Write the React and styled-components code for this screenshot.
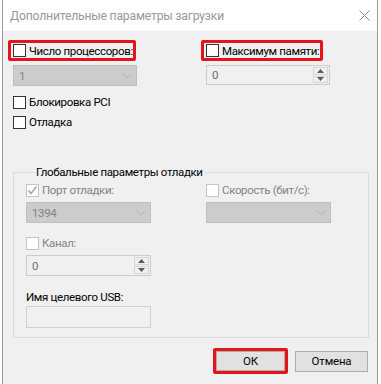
import React from 'react';
import styled, { createGlobalStyle } from 'styled-components';

const GlobalStyle = createGlobalStyle`
  html, body {
    margin: 0;
    padding: 0;
    background: #ffffff;
  }
  body {
    font-family: Roboto, "Noto Sans", sans-serif;
    font-size: 11.5px;
    letter-spacing: -0.35px;
    color: #000;
  }
`;

const Window = styled.div`
  width: 376px;
  height: 384px;
  margin-left: 2px;
  box-sizing: border-box;
  border-left: 1px solid #9a9a9a;
  border-right: 1px solid #9a9a9a;
  background: #f0f0f0;
  display: flex;
  flex-direction: column;
`;

const TitleBar = styled.div`
  height: 31px;
  flex-shrink: 0;
  background: #ffffff;
  display: flex;
  align-items: center;
  justify-content: space-between;
  padding: 0 7px 0 7px;
  box-sizing: border-box;
`;

const Title = styled.span`
  color: #999999;
  font-size: 12.2px;
  letter-spacing: -0.2px;
  line-height: 16px;
  padding-top: 1px;
  white-space: nowrap;
`;

const Body = styled.div`
  padding: 9px 9px 0 10px;
  display: flex;
  flex-direction: column;
`;

const TopGrid = styled.div`
  display: grid;
  grid-template-columns: 193px 1fr;
  row-gap: 4px;
`;

const Highlight = styled.div`
  display: flex;
  align-items: center;
  gap: 3px;
  box-sizing: border-box;
  width: ${p => p.$width}px;
  height: ${p => p.$height || 21}px;
  margin-left: -5px;
  padding-left: 2px;
  border: 3px solid #e3141b;
  border-radius: 2px;
  white-space: nowrap;
`;

const CheckRow = styled.label`
  display: flex;
  align-items: center;
  gap: 3px;
  height: 13px;
  margin-top: ${p => p.$top || 0}px;
  color: ${p => (p.$disabled ? '#838383' : '#000')};
  line-height: 13px;
  white-space: nowrap;
`;

const Box = styled.span`
  width: 13px;
  height: 13px;
  box-sizing: border-box;
  flex-shrink: 0;
  background: #ffffff;
  border: 1px solid ${p => (p.$disabled ? '#c4c4c4' : '#333333')};
  display: flex;
  align-items: center;
  justify-content: center;
`;

const Combo = styled.div`
  width: ${p => p.$width}px;
  height: 21px;
  box-sizing: border-box;
  background: #cccccc;
  border: 1px solid #bfbfbf;
  display: flex;
  align-items: center;
  justify-content: space-between;
  padding: 0 4px 0 5px;
  color: #838383;
`;

const Spin = styled.div`
  width: ${p => p.$width}px;
  height: ${p => p.$height || 21}px;
  box-sizing: border-box;
  background: #f0f0f0;
  border: 1px solid #cccccc;
  display: flex;
  align-items: stretch;
  color: #6d6d6d;
`;

const SpinText = styled.span`
  flex: 1;
  display: flex;
  align-items: center;
  padding-left: 5px;
`;

const SpinButtons = styled.div`
  width: 15px;
  display: flex;
  flex-direction: column;
  padding: 1px 1px 1px 0;
  gap: 1px;
`;

const SpinButton = styled.div`
  flex: 1;
  border: 1px solid #d6d6d6;
  background: #f0f0f0;
  display: flex;
  align-items: center;
  justify-content: center;
`;

const Group = styled.fieldset`
  margin: 35px 0 0 0;
  padding: 4px 0 9px 12px;
  width: 356px;
  box-sizing: border-box;
  border: 1px solid #dcdcdc;
  min-inline-size: 0;
`;

const Legend = styled.legend`
  margin-left: 9px;
  padding: 0 1px;
  line-height: 16px;
  color: #000;
`;

const InnerGrid = styled.div`
  display: grid;
  grid-template-columns: 180px 1fr;
`;

const Field = styled.div`
  margin-top: ${p => p.$top || 0}px;
`;

const FieldLabel = styled.div`
  margin-top: 13px;
  line-height: 16px;
  height: 16px;
`;

const TextBox = styled.div`
  margin-top: 1px;
  width: 125px;
  height: 22px;
  box-sizing: border-box;
  border: 1px solid #d0d0d0;
  background: #f0f0f0;
`;

const Footer = styled.div`
  display: flex;
  justify-content: flex-end;
  align-items: center;
  gap: 7px;
  margin-top: 10px;
`;

const ButtonFrame = styled.div`
  border: 3px solid #e3141b;
  border-radius: 2px;
  display: flex;
`;

const Button = styled.button`
  width: ${p => p.$width}px;
  height: ${p => p.$height}px;
  box-sizing: border-box;
  border: 1px solid #adadad;
  background: #e1e1e1;
  font-family: inherit;
  font-size: 11.5px;
  letter-spacing: -0.2px;
  color: #000;
  padding: 0;
`;

const Chevron = () => (
  <svg width="10" height="6" viewBox="0 0 10 6">
    <polyline points="0.5,0.5 5,5 9.5,0.5" fill="none" stroke="#b4b4b4" strokeWidth="1" />
  </svg>
);

const CloseIcon = () => (
  <svg width="11" height="11" viewBox="0 0 11 11">
    <path d="M0.5 0.5 L10.5 10.5 M10.5 0.5 L0.5 10.5" stroke="#8a8a8a" strokeWidth="1" fill="none" />
  </svg>
);

const Check = ({ checked, disabled, label, top }) => (
  <CheckRow $top={top} $disabled={disabled}>
    <Box $disabled={disabled}>
      {checked && (
        <svg width="11" height="11" viewBox="0 0 11 11">
          <polyline points="1.5,5.5 4,8.5 9.5,1.5" fill="none" stroke="#a8a8a8" strokeWidth="1.6" />
        </svg>
      )}
    </Box>
    {label}
  </CheckRow>
);

const SpinBox = ({ value, width, height }) => (
  <Spin $width={width} $height={height}>
    <SpinText>{value}</SpinText>
    <SpinButtons>
      <SpinButton>
        <svg width="7" height="4" viewBox="0 0 7 4"><polygon points="3.5,0 7,4 0,4" fill="#5a5a5a" /></svg>
      </SpinButton>
      <SpinButton>
        <svg width="7" height="4" viewBox="0 0 7 4"><polygon points="0,0 7,0 3.5,4" fill="#5a5a5a" /></svg>
      </SpinButton>
    </SpinButtons>
  </Spin>
);

export default function App() {
  return (
    <>
      <GlobalStyle />
      <Window>
        <TitleBar>
          <Title>Дополнительные параметры загрузки</Title>
          <CloseIcon />
        </TitleBar>
        <Body>
          <TopGrid>
            <Highlight $width={128}>
              <Box />
              <span>Число процессоров:</span>
            </Highlight>
            <Highlight $width={122}>
              <Box />
              <span>Максимум памяти:</span>
            </Highlight>
            <Combo $width={124}>
              <span>1</span>
              <Chevron />
            </Combo>
            <SpinBox value="0" width={124} height={20} />
          </TopGrid>
          <Check label="Блокировка PCI" top={10} />
          <Check label="Отладка" top={7} />
          <Group>
            <Legend>Глобальные параметры отладки</Legend>
            <InnerGrid>
              <Check label="Порт отладки:" checked disabled />
              <Check label="Скорость (бит/с):" disabled />
              <Field $top={5}>
                <Combo $width={125}>
                  <span>1394</span>
                  <Chevron />
                </Combo>
              </Field>
              <Field $top={5}>
                <Combo $width={125}>
                  <span />
                  <Chevron />
                </Combo>
              </Field>
            </InnerGrid>
            <Check label="Канал:" disabled top={14} />
            <Field $top={5}>
              <SpinBox value="0" width={125} />
            </Field>
            <FieldLabel>Имя целевого USB:</FieldLabel>
            <TextBox />
          </Group>
          <Footer>
            <ButtonFrame>
              <Button $width={69} $height={20}>ОК</Button>
            </ButtonFrame>
            <Button $width={73} $height={21}>Отмена</Button>
          </Footer>
        </Body>
      </Window>
    </>
  );
}
